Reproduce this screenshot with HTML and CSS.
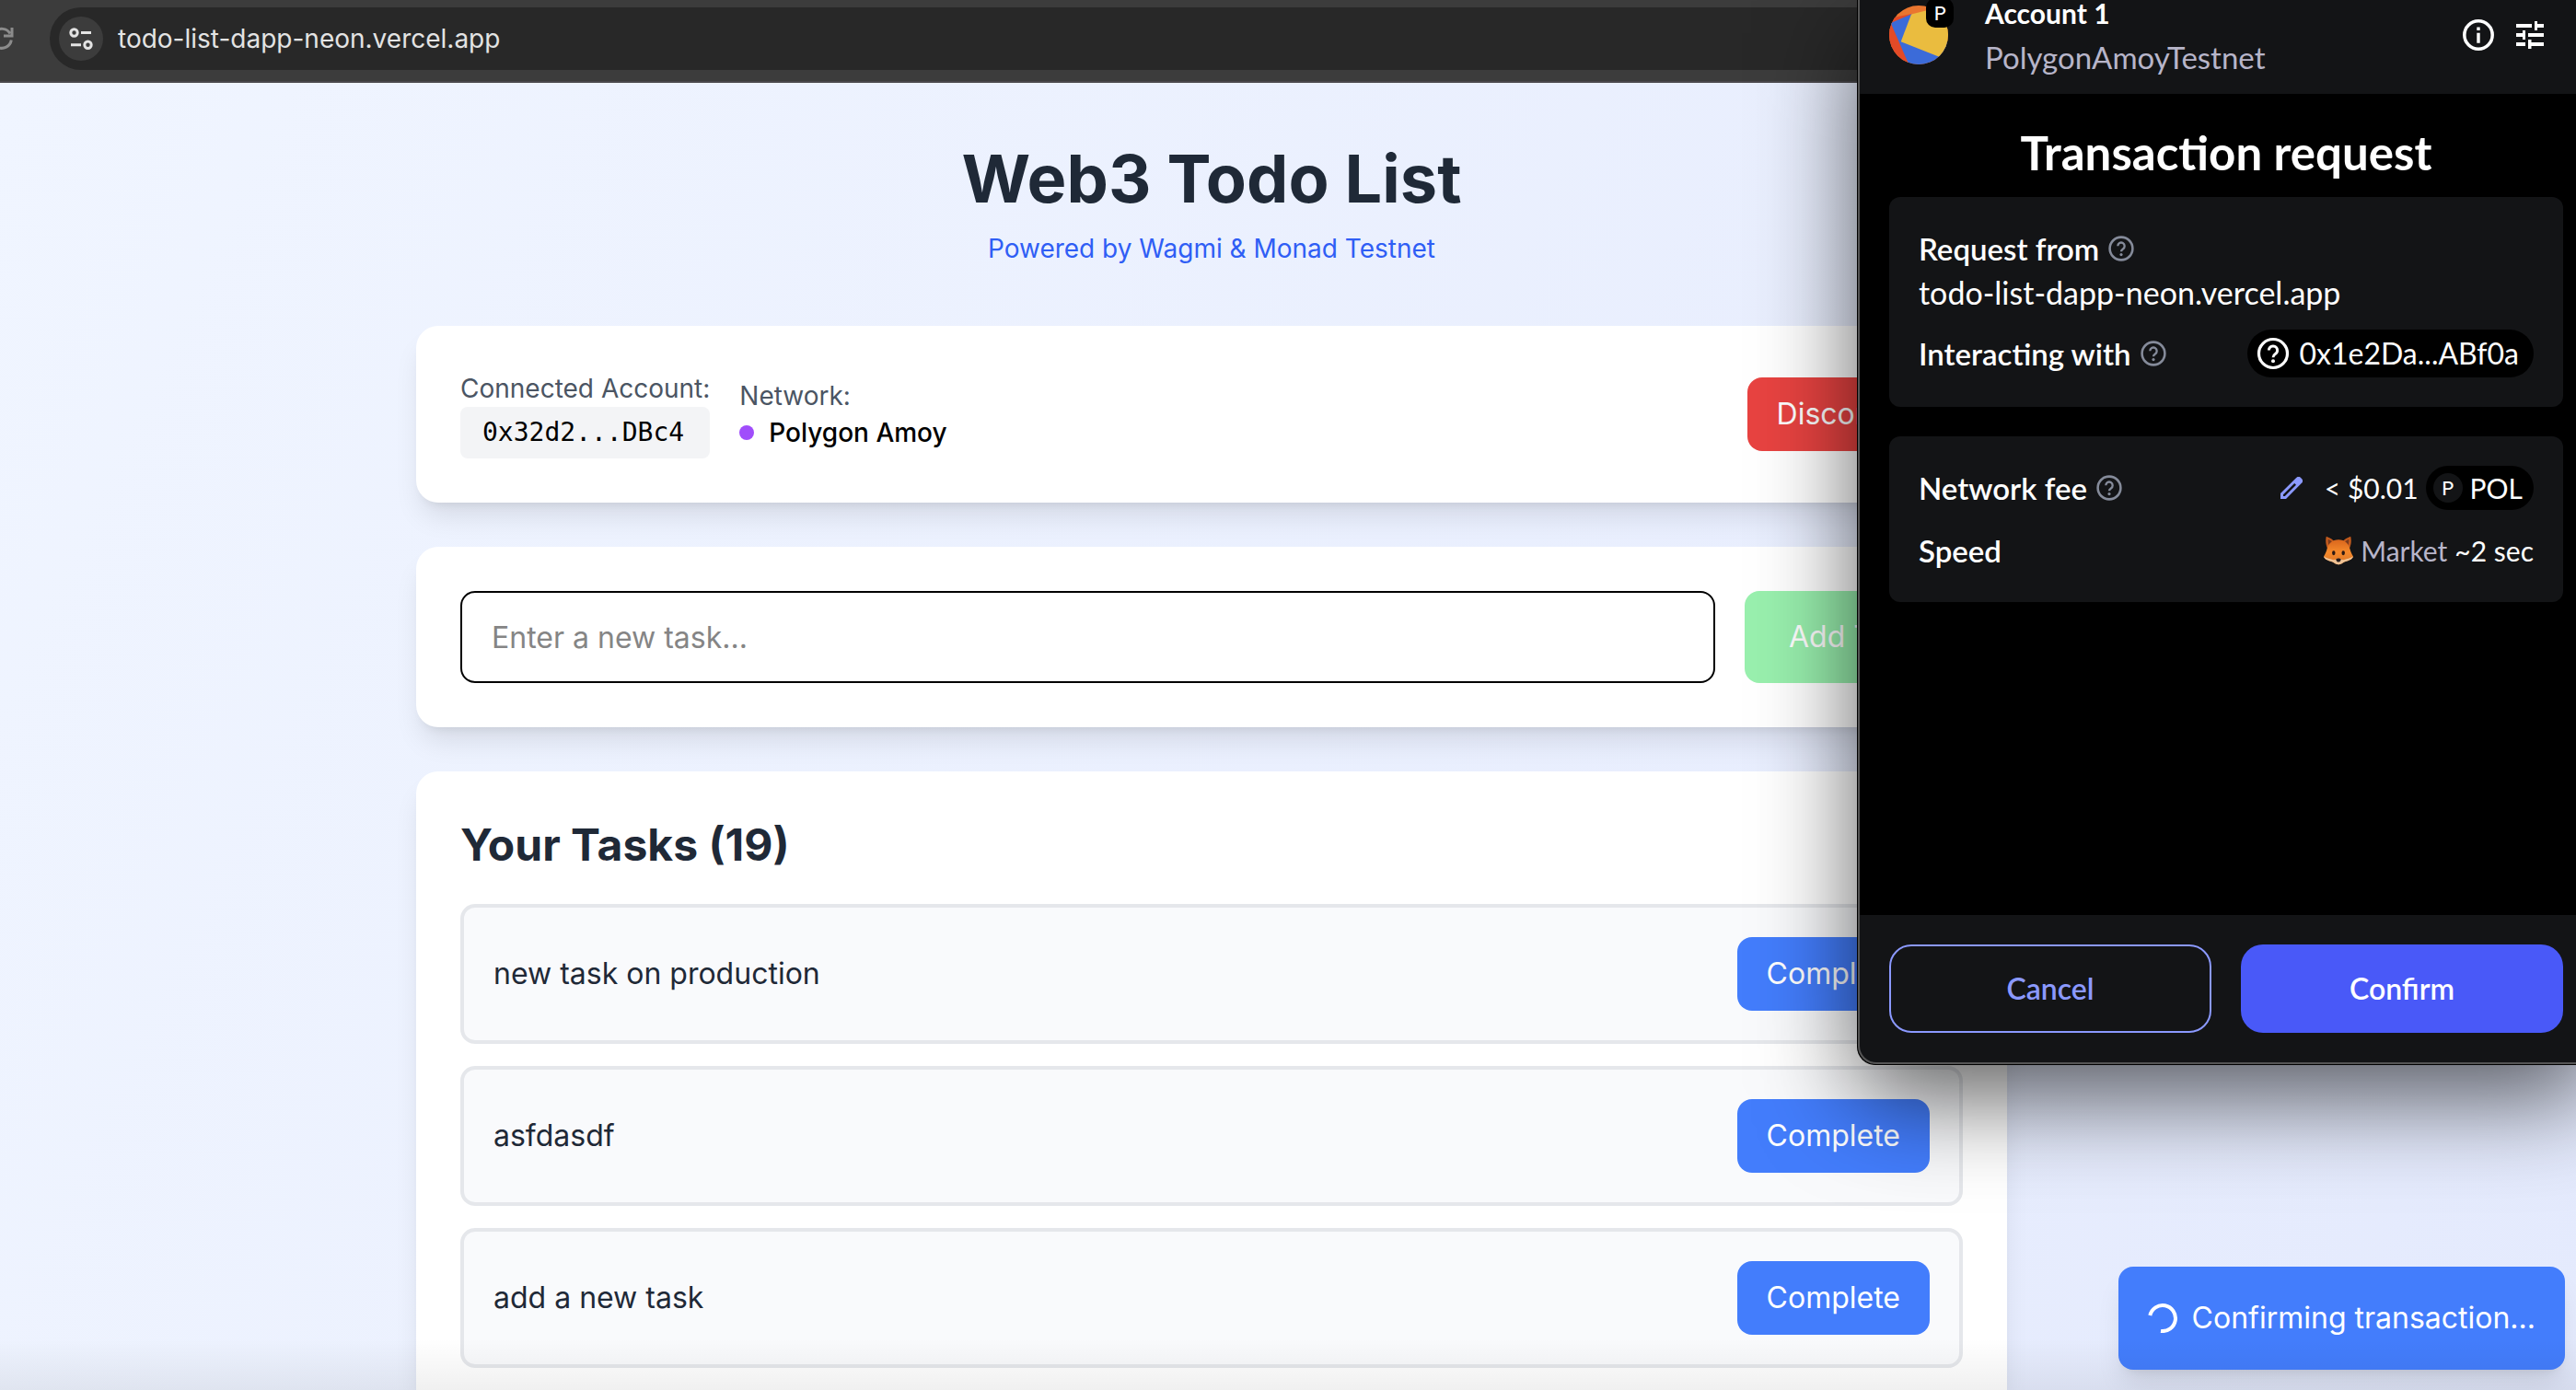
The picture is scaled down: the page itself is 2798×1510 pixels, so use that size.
FILE: index.html
```html
<!DOCTYPE html>
<html lang="en">
<head>
<meta charset="utf-8">
<title>Web3 Todo List</title>
<link rel="stylesheet" href="styles.css">
</head>
<body>
<svg class="sprite" aria-hidden="true">
  <symbol id="icon-question" viewBox="0 0 40 40">
    <circle cx="20" cy="20" r="15.5" fill="none" stroke="currentColor" stroke-width="3.2"/>
    <path d="M15.4 16.6a4.6 4.6 0 1 1 7 3.9c-1.6 1-2.4 1.800-2.4 3.700" fill="none" stroke="currentColor" stroke-width="2.900"/>
    <circle cx="20" cy="28.200" r="2" fill="currentColor"/>
  </symbol>
</svg>

<header class="toolbar">
  <button class="reload" type="button" aria-label="Reload">
    <svg viewBox="0 0 28 28" fill="none" stroke="currentColor" stroke-width="3">
      <path d="M24.300 15.500A10.500 10.500 0 1 1 23 8.500M25 2v9h-9"/>
    </svg>
  </button>
  <div class="address">
    <button class="site-info" type="button" aria-label="Site information">
      <svg viewBox="0 0 28 28" fill="none" stroke="currentColor" stroke-width="3">
        <circle cx="6.500" cy="7.500" r="3.700"/><path d="M14 7.500h11M3 20.700h11"/><circle cx="21.500" cy="20.700" r="3.700"/>
      </svg>
    </button>
    <span class="address-text">todo-list-dapp-neon.vercel.app</span>
  </div>
</header>

<main class="page">
  <div class="container">
    <div class="intro">
      <h1>Web3 Todo List</h1>
      <p>Powered by Wagmi &amp; Monad Testnet</p>
    </div>

    <section class="card account">
      <div class="account-info">
        <div class="field">
          <span class="label">Connected Account:</span>
          <code class="wallet">0x32d2...DBc4</code>
        </div>
        <div class="field">
          <span class="label">Network:</span>
          <span class="network"><i class="dot"></i>Polygon Amoy</span>
        </div>
      </div>
      <button class="btn btn-red" type="button">Disconnect</button>
    </section>

    <form class="card add-form">
      <input class="task-input" type="text" placeholder="Enter a new task..." aria-label="New task">
      <button class="btn btn-green" type="button">Add Task</button>
    </form>

    <section class="card tasks">
      <h2>Your Tasks (19)</h2>
      <ul class="task-list">
        <li class="task"><span>new task on production</span><button class="btn btn-blue" type="button">Complete</button></li>
        <li class="task"><span>asfdasdf</span><button class="btn btn-blue" type="button">Complete</button></li>
        <li class="task"><span>add a new task</span><button class="btn btn-blue" type="button">Complete</button></li>
      </ul>
    </section>
  </div>
</main>

<aside class="wallet-popup">
  <header class="wallet-header">
    <div class="avatar">
      <svg viewBox="0 0 64 64">
        <defs><clipPath id="round"><circle cx="32" cy="32" r="32"/></clipPath></defs>
        <g clip-path="url(#round)">
          <path fill="#ea762f" d="M0 0h64v64H0z"/>
          <path fill="#e34a27" d="M0 14L24.500 9 22 64H0z"/>
          <path fill="#3b6bd9" d="M1.700 19L24.500 9.300 64 40V64H21.300z"/>
          <path fill="#eabc3f" d="M24 9.500L44 4.500 70 20 60 58 12.700 39.300z"/>
        </g>
      </svg>
      <span class="avatar-badge">P</span>
    </div>
    <div class="wallet-account">
      <strong>Account 1</strong>
      <span>PolygonAmoyTestnet</span>
    </div>
    <div class="wallet-actions">
      <button type="button" aria-label="Account details">
        <svg viewBox="0 0 40 40">
          <circle cx="20" cy="20" r="15.200" fill="none" stroke="currentColor" stroke-width="3.500"/>
          <path fill="currentColor" d="M18.300 11.500h3.400v3.400h-3.400zM18.300 17.800h3.400v11h-3.400z"/>
        </svg>
      </button>
      <button type="button" aria-label="Advanced settings">
        <svg viewBox="0 0 40 40" fill="currentColor">
          <path d="M5 8h17v4H5zM25 5h3v3h7v4h-7v3h-3zM5 18h7v-3h3v10h-3v-3H5zM18 18h17v4H18zM5 28h10v4H5zM18 25h3.500v3H35v4H21.500v3H18z"/>
        </svg>
      </button>
    </div>
  </header>

  <div class="wallet-body">
    <h2>Transaction request</h2>
    <section class="panel">
      <div class="row">
        <span class="row-label">Request from <svg class="help"><use href="#icon-question"/></svg></span>
      </div>
      <span class="site-url">todo-list-dapp-neon.vercel.app</span>
      <div class="row row-contract">
        <span class="row-label">Interacting with <svg class="help"><use href="#icon-question"/></svg></span>
        <span class="pill pill-contract"><svg><use href="#icon-question"/></svg>0x1e2Da...ABf0a</span>
      </div>
    </section>
    <section class="panel panel-fee">
      <div class="row">
        <span class="row-label">Network fee <svg class="help"><use href="#icon-question"/></svg></span>
        <span class="fee">
          <button class="edit" type="button" aria-label="Edit network fee">
            <svg viewBox="0 0 24 24" fill="currentColor" fill-rule="evenodd">
              <path d="M0 24v-6L17.200 1a3.400 3.400 0 0 1 4.900 0l.900.900a3.400 3.400 0 0 1 0 4.900L6 24zM3 21h1.800L17 8.800l-1.800-1.800L3 19.200z"/>
            </svg>
          </button>
          <span>&lt; $0.01</span>
          <span class="pill pill-token"><b>P</b>POL</span>
        </span>
      </div>
      <div class="row">
        <span class="row-label">Speed</span>
        <span class="speed">
          <svg class="fox" viewBox="0 0 92 88">
            <defs><linearGradient id="fur" x1="0" y1="0" x2="0" y2="1"><stop offset="0" stop-color="#d9651c"/><stop offset=".5" stop-color="#f58a2c"/><stop offset="1" stop-color="#d97428"/></linearGradient></defs>
            <path fill="#c25a1d" d="M8 0c11 4 21 10 27 18L12 38C6 26 5 12 8 0zM84 0c-11 4-21 10-27 18l23 20C86 26 87 12 84 0z"/>
            <path fill="#7a3a1c" d="M14 9c6 3 11 7 15 11l-12 10c-3-7-4-14-3-21zM78 9c-6 3-11 7-15 11l12 10c3-7 4-14 3-21z"/>
            <path fill="url(#fur)" d="M46 10c20 0 32 13 36 30 2 9 6 16 10 23-3 10-16 14-28 17-6 4-12 8-18 8s-12-4-18-8C16 77 3 73 0 63c4-7 8-14 10-23 4-17 16-30 36-30z"/>
            <path fill="#efc294" d="M0 63c10 6 20 7 28 10 7 2 12-4 18-4s11 6 18 4c8-3 18-4 28-10-3 10-16 14-28 17-6 4-12 8-18 8s-12-4-18-8C16 77 3 73 0 63z"/>
            <ellipse cx="31" cy="52" rx="5" ry="7" fill="#2c1a14"/><ellipse cx="61" cy="52" rx="5" ry="7" fill="#2c1a14"/>
            <path fill="#221a1c" d="M38 71c5-3 11-3 16 0-1 6-4 9-8 9s-7-3-8-9z"/>
          </svg>
          <span class="muted">Market</span>
          <span>~2 sec</span>
        </span>
      </div>
    </section>
  </div>

  <footer class="wallet-footer">
    <button class="wallet-btn wallet-cancel" type="button">Cancel</button>
    <button class="wallet-btn wallet-confirm" type="button">Confirm</button>
  </footer>
</aside>

<div class="toast" role="status">
  <svg viewBox="0 0 32 32" fill="none" stroke="currentColor" stroke-width="4"><path d="M2.300 13A14 14 0 1 1 14 29.900"/></svg>
  <span>Confirming transaction...</span>
</div>
<div class="dock-shade"></div>
</body>
</html>
```
FILE: styles.css
```css
* {
  box-sizing: border-box;
  margin: 0;
  padding: 0;
}

body {
  position: relative;
  display: flex;
  flex-direction: column;
  min-height: 100vh;
  overflow: hidden;
  font: 32px/48px Inter, "Liberation Sans", sans-serif;
  color: #000;
}

button {
  border: 0;
  background: none;
  color: inherit;
  font: inherit;
}

svg {
  display: block;
  flex: none;
}

.sprite {
  position: absolute;
  width: 0;
  height: 0;
}

/* Browser toolbar */

.toolbar {
  display: flex;
  align-items: center;
  height: 90px;
  padding-bottom: 4px;
  border-bottom: 2px solid #4a484c;
  background: #3c3c3c;
}

.reload {
  margin-left: -12px;
  color: #8c8c8c;
}

.reload svg,
.site-info svg {
  width: 28px;
  height: 28px;
}

.address {
  display: flex;
  flex: 1;
  align-items: center;
  gap: 16px;
  height: 68px;
  margin-left: 38px;
  padding-left: 10px;
  border-radius: 34px 0 0 34px;
  background: #282828;
}

.site-info {
  display: grid;
  place-items: center;
  width: 48px;
  height: 48px;
  border-radius: 50%;
  background: #3c3c3c;
  color: #e3e3e3;
}

.address-text {
  color: #e3e3e3;
  font-size: 28px;
}

/* Page */

.page {
  flex: 1;
  padding: 64px 166px 0 0;
  background: linear-gradient(115deg, #f0f5ff, #e4eafd);
}

.container {
  display: flex;
  flex-direction: column;
  gap: 48px;
  max-width: 1728px;
  margin: 0 auto;
}

.intro {
  display: flex;
  flex-direction: column;
  gap: 16px;
  margin-bottom: 16px;
  text-align: center;
}

.intro h1 {
  color: #1f2937;
  font-size: 72px;
  line-height: 80px;
}

.intro p {
  color: #2f5ef5;
  font-size: 28px;
  line-height: 40px;
}

.card {
  padding: 48px;
  border-radius: 24px;
  background: #fff;
  box-shadow: 0 20px 30px -6px rgba(0, 0, 0, .1), 0 8px 12px -8px rgba(0, 0, 0, .1);
}

.account {
  display: flex;
  align-items: center;
  justify-content: space-between;
}

.account-info {
  display: flex;
  align-items: center;
  gap: 32px;
  font-size: 28px;
  line-height: 40px;
}

.field {
  display: flex;
  flex-direction: column;
}

.label {
  color: #4b5563;
}

.wallet {
  padding: 8px 24px;
  border-radius: 8px;
  background: #f3f4f6;
  font: 28px/40px "DejaVu Sans Mono", "Liberation Mono", monospace;
}

.network {
  display: flex;
  align-items: center;
  gap: 16px;
  font-weight: 500;
}

.dot {
  width: 16px;
  height: 16px;
  border-radius: 50%;
  background: #a04dfb;
}

.btn {
  padding: 16px 32px;
  border-radius: 16px;
  color: #fff;
}

.btn-red {
  background: #e84341;
}

.btn-green {
  padding: 16px 48px;
  background: #99f0ae;
}

.btn-blue {
  background: #437dfc;
}

.add-form {
  display: flex;
  gap: 32px;
}

.task-input {
  flex: 1;
  height: 100px;
  padding: 0 32px;
  border: 2px solid #000;
  border-radius: 16px;
  background: #fff;
  font: inherit;
}

.task-input::placeholder {
  color: #858585;
  opacity: 1;
}

.tasks {
  padding-bottom: 24px;
  border-radius: 24px 24px 0 0;
}

.tasks h2 {
  margin-bottom: 32px;
  color: #1f2937;
  font-size: 48px;
  line-height: 64px;
}

.task-list {
  display: flex;
  flex-direction: column;
  gap: 24px;
  list-style: none;
}

.task {
  display: flex;
  align-items: center;
  justify-content: space-between;
  padding: 32px;
  border: 4px solid #e5e7eb;
  border-radius: 16px;
  background: #f9fafc;
  color: #1f2937;
}

/* Wallet window, floating over the page */

.wallet-popup {
  position: absolute;
  top: 0;
  right: -19px;
  display: flex;
  flex-direction: column;
  width: 800px;
  height: 1157px;
  border: 1px solid #000;
  border-top: 0;
  border-radius: 0 0 20px 20px;
  background: #000;
  box-shadow: 0 36px 104px rgba(0, 0, 0, .62);
  color: #fff;
  font-family: Lato, "Open Sans", sans-serif;
}

.wallet-popup::after {
  content: "";
  position: absolute;
  inset: 0;
  border: 2px solid #555;
  border-top: 0;
  border-radius: 0 0 20px 20px;
  pointer-events: none;
}

.wallet-header {
  display: flex;
  align-items: center;
  margin-top: -10px;
  padding: 0 48px 16px 34px;
  background: #131416;
}

.avatar {
  position: relative;
}

.avatar > svg {
  width: 64px;
  height: 64px;
}

.avatar-badge {
  position: absolute;
  top: -8px;
  right: -6px;
  width: 30px;
  height: 32px;
  border-radius: 10px;
  background: #000;
  font-size: 22px;
  line-height: 32px;
  text-align: center;
}

.wallet-account {
  display: flex;
  flex: 1;
  flex-direction: column;
  margin-left: 40px;
}

.wallet-account strong {
  font-size: 30px;
  font-weight: 700;
}

.wallet-account span {
  font-size: 33px;
}

.wallet-account span,
.muted {
  color: #b7b5c9;
}

.wallet-actions {
  display: flex;
  gap: 16px;
}

.wallet-actions svg {
  width: 40px;
  height: 40px;
}

.wallet-body {
  display: flex;
  flex: 1;
  flex-direction: column;
  gap: 32px;
  padding: 32px 32px 0 34px;
}

.wallet-body h2 {
  margin-bottom: -16px;
  font-size: 51px;
  line-height: 64px;
  text-align: center;
}

.panel {
  padding: 32px;
  border-radius: 12px;
  background: #131416;
}

.panel-fee {
  display: flex;
  flex-direction: column;
  gap: 20px;
}

.row {
  display: flex;
  align-items: center;
  justify-content: space-between;
}

.row-contract {
  margin-top: 16px;
}

.row-label {
  display: flex;
  align-items: center;
  gap: 8px;
  font-size: 33px;
  font-weight: 600;
}

.help {
  width: 32px;
  height: 32px;
  color: #858b9a;
}

.site-url {
  display: block;
  font-size: 34px;
}

.pill {
  display: flex;
  align-items: center;
  border-radius: 26px;
  background: #000;
}

.pill-contract {
  gap: 8px;
  padding: 2px 16px 2px 8px;
}

.pill-contract svg {
  width: 40px;
  height: 40px;
}

.pill-token {
  gap: 8px;
  padding: 0 12px 0 8px;
}

.pill-token b {
  width: 32px;
  height: 32px;
  border-radius: 50%;
  background: #131416;
  font-size: 22px;
  font-weight: 400;
  line-height: 32px;
  text-align: center;
}

.fee,
.speed {
  display: flex;
  align-items: center;
  gap: 8px;
  font-size: 30px;
}

.edit {
  margin-right: 16px;
  color: #8b99ff;
}

.edit svg {
  width: 24px;
  height: 24px;
}

.fox {
  width: 32px;
  height: 32px;
}

.wallet-footer {
  display: grid;
  grid-template-columns: 1fr 1fr;
  gap: 32px;
  padding: 32px 32px 34px 34px;
  border-radius: 0 0 20px 20px;
  background: #131416;
}

.wallet-btn {
  height: 96px;
  border-radius: 24px;
  font-weight: 600;
}

.wallet-cancel {
  border: 2px solid #8b99ff;
  color: #8b99ff;
}

.wallet-confirm {
  background: #4959f8;
}

/* Overlays pinned to the bottom of the window */

.toast {
  position: absolute;
  right: 12px;
  bottom: 22px;
  display: flex;
  align-items: center;
  gap: 16px;
  padding: 32px;
  border-radius: 16px;
  background: #437dfc;
  box-shadow: 0 20px 30px -6px rgba(0, 0, 0, .1), 0 8px 12px -8px rgba(0, 0, 0, .1);
  color: #fff;
}

.toast svg {
  width: 32px;
  height: 32px;
}

.dock-shade {
  position: absolute;
  right: 0;
  bottom: 0;
  left: 0;
  height: 56px;
  background: linear-gradient(transparent, rgba(0, 0, 0, .06));
  pointer-events: none;
}
```
